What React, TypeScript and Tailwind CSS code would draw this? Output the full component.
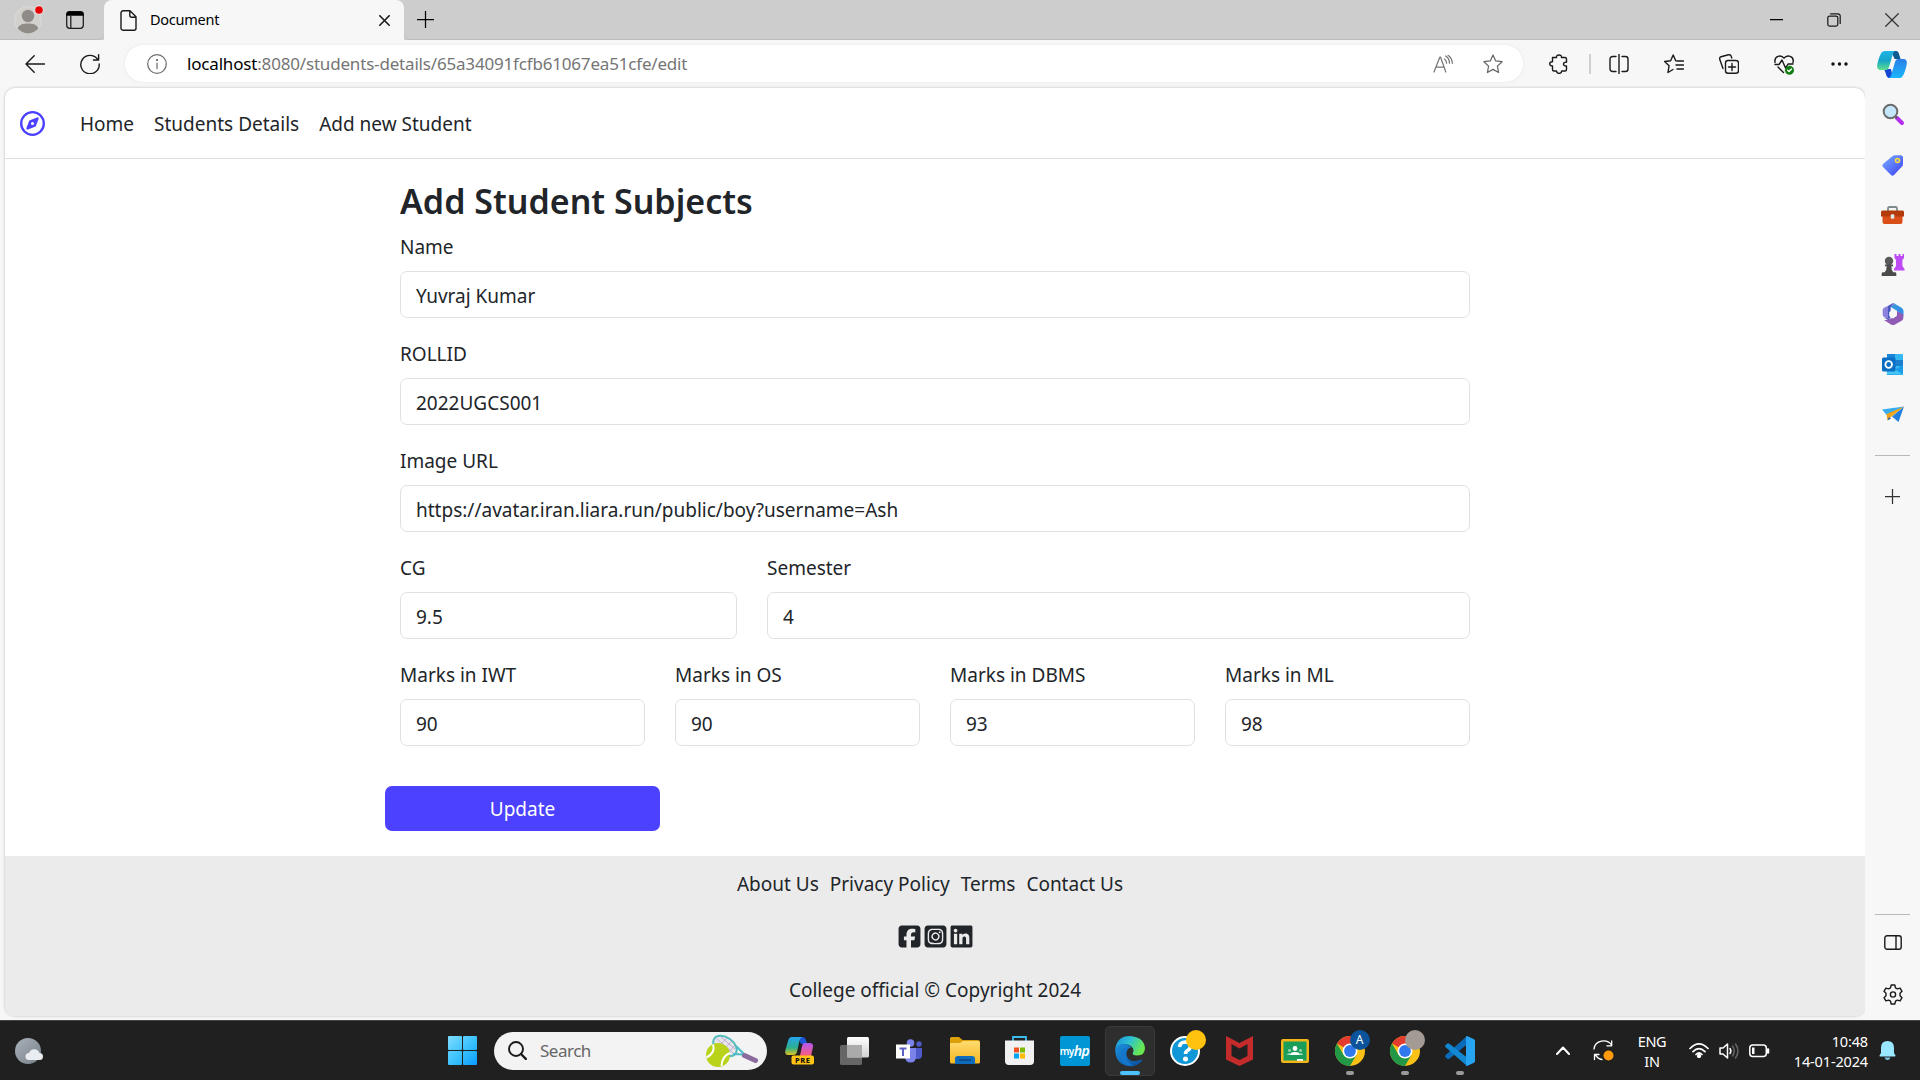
import React from "react";
import { FaLinkedin, FaRegCompass, FaSquareFacebook, FaSquareInstagram } from "react-icons/fa6";

type Kids = { children: React.ReactNode };

function Line({ w, h, vb, sw = 1.25, color = "#1a1a1a", children }: Kids & { w: number; h: number; vb?: string; sw?: number; color?: string }) {
  return (
    <svg width={w} height={h} viewBox={vb ?? `0 0 ${w} ${h}`} fill="none" stroke={color} strokeWidth={sw} strokeLinecap="round" strokeLinejoin="round" className="shrink-0">
      {children}
    </svg>
  );
}

function Art({ w, h, children }: Kids & { w: number; h: number }) {
  return (
    <svg width={w} height={h} viewBox={`0 0 ${w} ${h}`} className="block shrink-0 overflow-visible">
      {children}
    </svg>
  );
}

function Cell({ children, className = "" }: Kids & { className?: string }) {
  return <div className={`flex shrink-0 items-center justify-center ${className}`}>{children}</div>;
}

/* ---------- browser chrome ---------- */

function TabStrip() {
  return (
    <div className="flex h-10 shrink-0 bg-[#cdcdcd] text-black">
      <div className="flex w-[104px] items-center rounded-br-[6px] border-b border-[#bdbdbd] pl-[14px]">
        <Art w={30} h={28}>
          <circle cx="14" cy="14" r="13.3" fill="#d2d0cc" stroke="#dedcd8" />
          <circle cx="14" cy="10" r="6.2" fill="#8f8b87" />
          <path d="M3.6 22.3C5 18.6 9 17.5 14 17.5s9 1.100 10.400 4.800A13.300 13.300 0 0 1 14 27.500a13.300 13.300 0 0 1-10.400-5.200Z" fill="#8f8b87" />
          <circle cx="25" cy="4" r="4.700" fill="#e8e4e4" />
          <circle cx="25" cy="4" r="3.800" fill="#e60000" />
        </Art>
        <div className="ml-[22px]">
          <Line w={18} h={18}>
            <rect x="0.700" y="0.700" width="16.600" height="16.600" rx="3" />
            <path d="M1 4V3a2 2 0 0 1 2-2h12a2 2 0 0 1 2 2v1Z" fill="#000" stroke="#000" />
            <path d="M4.800 5v12" />
          </Line>
        </div>
      </div>
      <div className="flex w-[300px] items-center rounded-t-[8px] bg-[#f7f7f7] pl-4 pr-[14px]">
        <Line w={17} h={21} sw={1.4}>
          <path d="M3 .8h7l6 6v11.400a2 2 0 0 1-2 2H3a2 2 0 0 1-2-2V2.800a2 2 0 0 1 2-2ZM9.800 1v4.200a2 2 0 0 0 2 2H16" />
        </Line>
        <span className="ml-[13px] text-[14.500px] tracking-[-0.250px]">Document</span>
        <div className="ml-auto mt-px">
          <Line w={11} h={11} sw={1.6}>
            <path d="M.8.8l9.400 9.400M10.200.8L.8 10.200" />
          </Line>
        </div>
      </div>
      <div className="flex flex-1 items-center rounded-bl-[6px] border-b border-[#bdbdbd] pl-[13px] pr-[21px]">
        <Line w={17} h={17} color="#000">
          <path d="M8.500.5v16M.5 8.500h16" />
        </Line>
        <div className="ml-auto flex items-center">
          <Line w={13} h={13} color="#000">
            <path d="M0 6.500h13" />
          </Line>
          <div className="ml-11">
            <Line w={14} h={14}>
              <rect x=".8" y="3" width="10" height="10" rx="1.800" />
              <path d="M3.600.8H11a2.200 2.200 0 0 1 2.200 2.200v7.400" />
            </Line>
          </div>
          <div className="ml-[44px]">
            <Line w={14} h={14} color="#333">
              <path d="M.7.7l12.600 12.600M13.300.7L.7 13.300" />
            </Line>
          </div>
        </div>
      </div>
    </div>
  );
}

const STAR = "M10 1l2.700 5.900 6.400.8-4.700 4.400 1.200 6.400L10 15.400l-5.600 3.100 1.200-6.400L.9 7.700l6.400-.8Z";

function CopilotIcon() {
  return (
    <Art w={30} h={27}>
      <defs>
        <linearGradient id="cpA" x1="0" y1="0" x2="0" y2="1"><stop stopColor="#1fb4e8" /><stop offset=".5" stopColor="#16a5c8" /><stop offset="1" stopColor="#5fe08e" /></linearGradient>
        <linearGradient id="cpB" x1="0" y1="0" x2="0" y2="1"><stop stopColor="#2b7fe8" /><stop offset="1" stopColor="#19b6fb" /></linearGradient>
      </defs>
      <path d="M14 0h5c2.500 0 3 2.500 3.600 5l1 3h-6Z" fill="#0c5a92" />
      <path d="M7 18h7l2 9h-3c-3 0-3.500-2-4.200-4.500Z" fill="#1747d4" />
      <path d="M8 0h10c-1.500 1-2 2.500-2.600 4.500L12 16c-.8 2.500-2 3-4 3H4c-3 0-4.500-2-3.700-5.500C1.200 9 2.600 5 3.800 2.800 4.800.8 6 0 8 0Z" fill="url(#cpA)" />
      <path d="M22 27H12c1.500-1 2-2.500 2.600-4.500L18 11c.8-2.500 2-3 4-3h4c3 0 4.500 2 3.700 5.500-.9 4.500-2.300 8.500-3.500 10.700C25.200 26.200 24 27 22 27Z" fill="url(#cpB)" />
    </Art>
  );
}

function Toolbar() {
  return (
    <div className="flex h-12 shrink-0 items-start bg-[#f7f7f7]">
      <div className="flex h-12 w-[125px] items-center pl-[25px]">
        <Line w={20} h={18} sw={1.4}>
          <path d="M19.500 9H1M9.200.8L1 9l8.200 8.200" />
        </Line>
        <div className="ml-[35px]">
          <Line w={20} h={20} sw={1.4}>
            <path d="M17.500 5.200A9.200 9.200 0 1 0 19.200 10M18.600.8V6h-5.200" />
          </Line>
        </div>
      </div>
      <div className="mt-[5px] flex h-[37px] w-[1398px] items-center rounded-full bg-white pl-[22px] pr-[20px] shadow-[0_0_4px_rgba(0,0,0,0.06)]">
        <Line w={20} h={20} color="#6e6e6e">
          <circle cx="10" cy="10" r="9.300" />
          <path d="M10 9v5.500" />
          <circle cx="10" cy="6" r=".5" fill="#6e6e6e" />
        </Line>
        <span className="ml-[20px] text-[17px] tracking-[-0.180px] text-[#757575]">
          <span className="text-black">localhost</span>:8080/students-details/65a34091fcfb61067ea51cfe/edit
        </span>
        <div className="ml-auto flex items-center gap-[30px]">
          <Line w={20} h={18} color="#767676">
            <path d="M1 17L6.800 2.200h.8L12.800 17M3 12h8M11.500 4c1.500 1 2 2.500 2.100 4.200M12.600 1c2.600 1.500 3.800 4 3.900 7.200M15 .3c3 2 4.200 4.700 4.300 8" />
          </Line>
          <Line w={20} h={20} color="#666"><path d={STAR} /></Line>
        </div>
      </div>
      <div className="flex h-12 flex-1 items-center">
        <Cell className="ml-[26px] w-5">
          <Line w={20} h={20} sw={1.4}>
            <path d="M3.500 3.500h4c-.6-3.400 5.600-3.400 5 0H16c1 0 1.500.5 1.500 1.500v3.200c-4-.7-4 4.400 0 3.800V15.500c0 1-.5 1.500-1.500 1.500h-3.300c-.2 3.200-5 3.200-5.200 0H5c-1 0-1.500-.5-1.500-1.500V12C-.2 12-.2 7.800 3.500 7.800Z" />
          </Line>
        </Cell>
        <div className="ml-5 h-5 w-[2px] bg-[#cfcfcf]" />
        <Cell className="ml-[18px] w-5">
          <Line w={20} h={20} sw={1.4}>
            <path d="M10 .5v19M7 2.500H3.500A2.500 2.500 0 0 0 1 5v10a2.500 2.500 0 0 0 2.500 2.500H7M13 2.500h3.500A2.500 2.500 0 0 1 19 5v10a2.500 2.500 0 0 1-2.500 2.500H13" />
          </Line>
        </Cell>
        <Cell className="ml-[35px] w-5">
          <Line w={20} h={20} sw={1.4}>
            <path d="M12 6.700h-.3L9.200 1 6.600 6.700l-6 .8 4.500 4.200L4 18.500l5-3M13 7h6.500M12 11h7.500M13 15h6.500" />
          </Line>
        </Cell>
        <Cell className="ml-[35px] w-5">
          <Line w={20} h={20} sw={1.4}>
            <rect x="6.500" y="6.500" width="13" height="12.800" rx="2.500" />
            <path d="M13 9.500v7M9.500 13h7M4 14.500L.8 5.400A2.200 2.200 0 0 1 2 2.700L9.500.8a2.200 2.200 0 0 1 2.700 1.500l.6 1.700" />
          </Line>
        </Cell>
        <Cell className="ml-[35px] w-5">
          <Line w={20} h={21} sw={1.4}>
            <path d="M1 8.500C0 2 7 .2 10 4.200 13 .2 20.500 2 19 8.500M1 10.500h4L8 6l3.500 8 2.500-4h5M4 13l5.500 5.500" />
            <circle cx="15.500" cy="16.200" r="4.300" fill="#107c10" stroke="#107c10" strokeWidth=".5" />
            <path d="M13.600 16.300l1.400 1.300 2.500-2.600" stroke="#fff" />
          </Line>
        </Cell>
        <Cell className="ml-[37px] w-4">
          <Art w={17} h={4}><g fill="#111"><circle cx="2" cy="2" r="1.700" /><circle cx="8.500" cy="2" r="1.700" /><circle cx="15" cy="2" r="1.700" /></g></Art>
        </Cell>
        <div className="ml-[30px]"><CopilotIcon /></div>
      </div>
    </div>
  );
}

/* ---------- edge sidebar ---------- */

function Sidebar() {
  return (
    <div className="flex w-[55px] flex-col items-center bg-[#f7f7f7]">
      <Cell className="h-[52px] w-full">
        <Art w={22} h={22}>
          <path d="M15 15l5 5" stroke="#b52ef0" strokeWidth="4" strokeLinecap="round" />
          <path d="M12.500 12.500l2.500 2.500" stroke="#555" strokeWidth="2" />
          <circle cx="8.500" cy="8.500" r="6.800" fill="#c4e6fb" stroke="#6c6c6c" strokeWidth="2" />
        </Art>
      </Cell>
      <Cell className="h-[50px] w-full">
        <Art w={21} h={21}>
          <defs><linearGradient id="tag" x1="0" y1="0" x2="1" y2="1"><stop stopColor="#79b2ff" /><stop offset="1" stopColor="#3c3cf5" /></linearGradient></defs>
          <path d="M10 1.500Q11.500.3 13 .3h5.500Q21 .3 21 3v6q0 1.500-1 2.500l-8 8.500q-1.500 1.500-3 0l-8-8q-1.500-1.500 0-3Z" fill="url(#tag)" />
          <circle cx="15.500" cy="5.500" r="2" fill="#5f8df5" stroke="#ffd83b" strokeWidth="1.600" />
        </Art>
      </Cell>
      <Cell className="h-[50px] w-full">
        <Art w={23} h={18}>
          <path d="M7 5V2.500Q7 1 8.500 1h6Q16 1 16 2.500V5" fill="none" stroke="#7d8a8c" strokeWidth="1.800" />
          <rect x="1.500" y="6" width="20" height="12" rx="2" fill="#d94f17" />
          <path d="M0 6q0-1.500 1.500-1.500h20Q23 4.500 23 6v4.500H0Z" fill="#b23a0c" />
          <rect x="9.700" y="8.300" width="3.600" height="4.500" rx="1" fill="#dfe8e8" />
        </Art>
      </Cell>
      <Cell className="h-[49px] w-full">
        <Art w={24} h={24}>
          <path d="M13.500 1h2v2h2V1h2v2h2V1H23v4l-1.600 2v6l2.100 3v1.500H13V16l2-3V7l-1.500-2Z" fill="#bd4af5" />
          <circle cx="8" cy="8" r="4.200" fill="#5a5a5a" />
          <path d="M4 11.500h8v1.700h-1.700q0 4 2 6h2q1 0 1 1.500V23H.7v-2.300q0-1.500 1-1.500h2q2-2 2-6H4Z" fill="#4b4b4b" />
        </Art>
      </Cell>
      <Cell className="h-[50px] w-full">
        <Art w={22} h={22}>
          <path d="M11 0l4 2 5 3q1.300 1 1.300 2.500V14l-6-3V8L7 3Z" fill="#3598dc" />
          <path d="M9 1.500Q11-.3 13.500.8L8.500 4v13L2 14Q.7 13 .7 11.500V7Q.7 5.500 2 4.700Z" fill="#8a82dd" />
          <path d="M8.500 4L11 .2 6 3v12l5 5-9-5.500q5 2 6.500-1Z" fill="#4759bd" />
          <path d="M21.300 11v4q0 1.500-1.300 2.500l-7 4q-2 1-4 0L2 17q5 .5 8-2l5-3.500V8Z" fill="#8f5bb5" />
          <path d="M15.200 8l6.100 3.500v-4L15 3.500Z" fill="#348ee8" />
          <path d="M11 6.800l3.800 2.300v4L11 15.400l-3.800-2.300v-4Z" fill="#f7f7f7" />
        </Art>
      </Cell>
      <Cell className="h-[50px] w-full">
        <Art w={21} h={21}>
          <rect x="5" y="0" width="16" height="19" rx="1" fill="#35b8f1" />
          <rect x="5" y="0" width="8" height="6" fill="#1a86d9" />
          <rect x="13" y="6" width="8" height="6" fill="#1b7fd0" />
          <path d="M4 21l17-10v9q0 1-1 1Z" fill="#1a9be8" />
          <path d="M4 10l17 10.500H5Z" fill="#45c6f5" />
          <rect x="0" y="3.500" width="13.500" height="14" rx="1.500" fill="#0a6fc4" />
          <circle cx="6.700" cy="10.500" r="3.300" fill="none" stroke="#fff" strokeWidth="1.800" />
        </Art>
      </Cell>
      <Cell className="h-[50px] w-full">
        <Art w={22} h={16}>
          <path d="M0 3.500L22 .5l-16 10Z" fill="#35adf0" />
          <path d="M22 .5L16.500 16 10 10.500Z" fill="#237fe0" />
          <path d="M22 .5L4.500 8l1 6.500 4-4Z" fill="#f0a31c" />
          <path d="M5.500 14.500l3.500-2-2-1.500Z" fill="#275da3" />
        </Art>
      </Cell>
      <div className="mt-4 h-px w-[35px] bg-[#b9b9b9]" />
      <Cell className="h-20 w-full">
        <Line w={15} h={15} color="#333"><path d="M7.500 0v15M0 7.500h15" /></Line>
      </Cell>
      <div className="mt-auto h-px w-[35px] bg-[#b9b9b9]" />
      <Cell className="h-[55px] w-full">
        <Line w={18} h={15} sw={1.4}><rect x=".8" y=".8" width="16.400" height="13.400" rx="2.200" /><path d="M12 1v13" /></Line>
      </Cell>
      <Cell className="mb-[2px] h-[48px] w-full">
        <Line w={20} h={21} sw={1.4}>
          <path d="M8.200 1h3.600l.7 2.800 1.900 1.100 2.700-.8 1.900 3.200-2 2v2.400l2 2-1.900 3.200-2.700-.8-1.900 1.100-.7 2.800H8.200l-.7-2.800-1.900-1.100-2.700.8L1 13.700l2-2V9.300l-2-2 1.900-3.200 2.700.8 1.900-1.100Z" />
          <circle cx="10" cy="10.500" r="2.600" />
        </Line>
      </Cell>
    </div>
  );
}

/* ---------- page ---------- */

function Field({ label, value, className = "", ls = "" }: { label: string; value: string; className?: string; ls?: string }) {
  return (
    <label className={`block ${className}`}>
      <span className={`block h-[30px] text-[19px] leading-[30px] ${ls}`}>{label}</span>
      <input
        defaultValue={value}
        className={`mt-[9px] block h-[47px] w-full rounded-[7px] border border-[#dee2e6] bg-white px-[15px] pt-[2px] text-[19px] outline-none ${ls}`}
      />
    </label>
  );
}

function Page() {
  return (
    <div className="ml-[5px] flex h-[928px] w-[1860px] flex-col overflow-hidden rounded-[10px] bg-white text-[19px] text-[#212529] shadow-[0_0_3px_rgba(0,0,0,0.25)]">
      <nav className="flex h-[71px] shrink-0 items-center border-b border-[#dee0e6] pl-[15px]">
        <FaRegCompass size={25} color="#4b41ff" />
        <div className="ml-[35px] flex gap-5 pt-[2px] leading-[30px]">
          <a>Home</a>
          <a>Students Details</a>
          <a>Add new Student</a>
        </div>
      </nav>
      <form className="ml-[395px] mt-[21px] w-[1070px]">
        <h1 className="mb-[10px] h-[42px] text-[34px] font-semibold leading-[42px]">Add Student Subjects</h1>
        <div className="flex flex-col gap-[21px]">
          <Field label="Name" value="Yuvraj Kumar" />
          <Field label="ROLLID" value="2022UGCS001" />
          <Field label="Image URL" value="https://avatar.iran.liara.run/public/boy?username=Ash" />
          <div className="flex gap-[30px]">
            <Field label="CG" value="9.5" className="w-[337px]" />
            <Field label="Semester" value="4" className="flex-1" />
          </div>
          <div className="grid grid-cols-4 gap-[30px]">
            <Field label="Marks in IWT" value="90" />
            <Field label="Marks in OS" value="90" />
            <Field label="Marks in DBMS" value="93" />
            <Field label="Marks in ML" value="98" />
          </div>
        </div>
        <button type="button" className="-ml-[15px] mt-10 block h-[45px] w-[275px] rounded-[7px] bg-[#4b41ff] pt-[2px] text-white">Update</button>
      </form>
      <footer className="mt-[25px] flex flex-1 flex-col items-center bg-[#ebebeb]">
        <div className="mr-[10px] mt-[13px] flex h-[30px] gap-[11px] leading-[30px]">
          <a>About Us</a>
          <a>Privacy Policy</a>
          <a>Terms</a>
          <a>Contact Us</a>
        </div>
        <div className="mt-[24px] flex h-[26px] items-center gap-[1px]">
          <FaSquareFacebook size={25} />
          <FaSquareInstagram size={25} />
          <FaLinkedin size={25} />
        </div>
        <div className="mt-[26px] h-[30px] leading-[30px]">College official © Copyright 2024</div>
      </footer>
    </div>
  );
}

/* ---------- taskbar ---------- */

function Chrome({ badge, letter }: { badge: string; letter?: string }) {
  return (
    <div className="relative">
      <Art w={30} h={30}>
        <circle cx="15" cy="15" r="15" fill="#fbc116" />
        <path d="M15 15L2 7.500A15 15 0 0 1 28 7.500H15Z" fill="#e33b2e" />
        <path d="M2 7.500A15 15 0 0 0 15 30l6.500-11.200L15 15 8.500 18.800Z" fill="#229746" />
        <circle cx="15" cy="15" r="7.500" fill="#fff" />
        <circle cx="15" cy="15" r="5.900" fill="#2f78ee" />
      </Art>
      <div className={`absolute -right-[5px] -top-[6px] flex size-5 items-center justify-center rounded-full text-[12px] leading-none text-white ${badge}`}>{letter}</div>
    </div>
  );
}

function AppCell({ children, running = false, active = false }: Kids & { running?: boolean; active?: boolean }) {
  return (
    <div className="flex h-[60px] w-[55px] shrink-0 items-center justify-center">
      <div className={`relative flex h-[50px] w-[50px] items-center justify-center rounded-[5px] ${active ? "border border-[#3a3a3a] bg-[#2e2e2e]" : ""}`}>
        {children}
        {running && <div className="absolute bottom-[1px] h-1 w-2 rounded-full bg-[#9a9a9a]" />}
        {active && <div className="absolute bottom-0 h-1 w-5 rounded-full bg-[#4cc2ff]" />}
      </div>
    </div>
  );
}

function Taskbar() {
  return (
    <div className="flex h-[60px] shrink-0 items-center border-t border-[#444] bg-[#202020] text-white">
      <div className="w-[448px] pl-[15px]">
        <Art w={28} h={26}>
          <defs><linearGradient id="moon" x1="0" y1="0" x2="1" y2="1"><stop stopColor="#aab2bb" /><stop offset="1" stopColor="#777f89" /></linearGradient></defs>
          <circle cx="13" cy="13" r="13" fill="url(#moon)" />
          <path d="M14 22a3.500 3.500 0 0 1 0-7 5.500 5.500 0 0 1 10.500 0 3.500 3.500 0 0 1 0 7Z" fill="#e9edf1" />
        </Art>
      </div>
      <Art w={29} h={29}>
        <defs><linearGradient id="win" x1="0" y1="0" x2="29" y2="29" gradientUnits="userSpaceOnUse"><stop stopColor="#7fdcff" /><stop offset=".55" stopColor="#38c0fb" /><stop offset="1" stopColor="#0a9cff" /></linearGradient></defs>
        <g fill="url(#win)"><rect width="14" height="14" rx="1" /><rect x="15" width="14" height="14" rx="1" /><rect y="15" width="14" height="14" rx="1" /><rect x="15" y="15" width="14" height="14" rx="1" /></g>
      </Art>
      <div className="ml-[17px] flex h-[38px] w-[273px] items-center rounded-full bg-[#f3f3f3] pl-[14px] pr-[9px]">
        <Line w={19} h={19} sw={1.9}><circle cx="8" cy="8" r="7" /><path d="M13 13l4.800 4.800" sw-end="" strokeWidth={2.4} /></Line>
        <span className="ml-[13px] text-[17px] tracking-[-0.500px] text-[#666]">Search</span>
        <div className="ml-auto">
          <Art w={53} h={32}>
            <ellipse cx="20" cy="11" rx="13" ry="8.500" transform="rotate(35 20 11)" fill="#e8e4ee" stroke="#4fbdb9" strokeWidth="2" />
            <path d="M12 4l16 14M16 2l14 12M10 9l14 12M12 13L22 3M16 17L27 6M22 19l8-9" stroke="#a99bb8" strokeWidth=".7" />
            <path d="M28 19l11 .5M31 11l8 8" stroke="#4fbdc9" strokeWidth="2" />
            <path d="M39.500 20.500l11 5" stroke="#8b6a9e" strokeWidth="5" strokeLinecap="round" />
            <circle cx="13" cy="20" r="12" fill="#b9d21a" />
            <path d="M8 9.500q3 8-6.500 13M25 18q-8 3-8.500 13" fill="none" stroke="#fff" strokeWidth="2" />
          </Art>
        </div>
      </div>
      <div className="ml-[5px] flex">
        <AppCell>
          <Art w={29} h={28}>
            <defs>
              <linearGradient id="pA" x1="0" y1="0" x2="0" y2="1"><stop stopColor="#25a5f0" /><stop offset=".6" stopColor="#2cb08c" /><stop offset="1" stopColor="#e3c51d" /></linearGradient>
              <linearGradient id="pB" x1="0" y1="0" x2="0" y2="1"><stop stopColor="#b057f0" /><stop offset="1" stopColor="#ff5e78" /></linearGradient>
            </defs>
            <path d="M13 0h4q3 0 4 3l1 4h-6Z" fill="#1f55d8" />
            <path d="M7 0h10q-2 1-2.600 4L12 15q-.8 3-4 3H3.500Q-.5 18 .3 13.500L3 4Q4 0 7 0Z" fill="url(#pA)" />
            <path d="M20 6h4.500q4 0 3.500 4l-2 9H15l2-10q.8-3 3-3Z" fill="url(#pB)" />
            <rect x="6.500" y="18.500" width="22.500" height="9" rx="2" fill="#ffc414" />
            <text x="17.800" y="26" textAnchor="middle" fontSize="7.500" fontWeight="800" letterSpacing=".6" fill="#111">PRE</text>
          </Art>
        </AppCell>
        <AppCell>
          <Art w={29} h={28}>
            <defs><linearGradient id="tv" x1="0" y1="0" x2="0" y2="1"><stop stopColor="#fff" /><stop offset="1" stopColor="#d0d0d0" /></linearGradient></defs>
            <rect y="8" width="22" height="20" rx="1.500" fill="#666" />
            <rect x="7" width="22" height="20.500" rx="1.500" fill="url(#tv)" />
            <rect x="7" y="8" width="15" height="12.500" fill="#aaa" />
          </Art>
        </AppCell>
        <AppCell>
          <Art w={28} h={24}>
            <circle cx="14.500" cy="4" r="3.800" fill="#7b83eb" /><circle cx="23" cy="5" r="2.700" fill="#5059c9" />
            <path d="M18 9h8v7q0 4-4 4h-4Z" fill="#5059c9" />
            <path d="M9 9h11v8.500q0 6-5.500 6T9 17.500Z" fill="#7b83eb" />
            <rect y="5.500" width="14" height="14" fill="#fff" />
            <path d="M3.500 8.500h7v2H8v6.500H6v-6.500H3.500Z" fill="#5b61c6" />
          </Art>
        </AppCell>
        <AppCell>
          <Art w={30} h={27}>
            <defs><linearGradient id="fold" x1="0" y1="0" x2="0" y2="1"><stop stopColor="#ffdb70" /><stop offset="1" stopColor="#f5b721" /></linearGradient></defs>
            <path d="M0 1.500Q0 0 1.500 0H9l3.500 3H28q2 0 2 2v6H0Z" fill="#dba00c" />
            <path d="M0 6h10l3-2h15q2 0 2 1.500V25q0 1.500-1.500 1.500h-27Q0 26.500 0 25Z" fill="url(#fold)" />
            <path d="M5 27v-5q0-3 3-3h14q3 0 3 3v5Z" fill="#0f6cbd" /><path d="M9 23h12" stroke="#083e74" strokeWidth="1.200" />
          </Art>
        </AppCell>
        <AppCell>
          <Art w={29} h={29}>
            <path d="M8 5V1h13v4" fill="none" stroke="#3bbdf0" strokeWidth="1.800" />
            <path d="M0 4.500h29V25q0 4-4 4H4q-4 0-4-4Z" fill="#f1f1f1" />
            <path d="M9 11.500h5v5H9Z" fill="#f25022" /><path d="M15 11.500h5v5h-5Z" fill="#7fba00" /><path d="M9 17.500h5v5H9Z" fill="#00a4ef" /><path d="M15 17.500h5v5h-5Z" fill="#ffb900" />
          </Art>
        </AppCell>
        <AppCell>
          <div className="flex size-[30px] items-center justify-center rounded-[2px] bg-[#0096d6] text-[10px] font-semibold leading-none tracking-[-0.500px]">
            my<span className="text-[14px] italic">hp</span>
          </div>
        </AppCell>
        <AppCell active>
          <Art w={30} h={30}>
            <defs>
              <linearGradient id="eA" x1="0" y1="0" x2="1" y2=".4"><stop stopColor="#1b8fdc" /><stop offset=".5" stopColor="#2cc1d4" /><stop offset="1" stopColor="#6ae850" /></linearGradient>
              <linearGradient id="eB" x1="0" y1="0" x2="1" y2="1"><stop stopColor="#1b91e0" /><stop offset="1" stopColor="#0c4b99" /></linearGradient>
            </defs>
            <path d="M.3 13Q2 0 15 0q14 1 15 12 0 7.500-8 7.500-5.500 0-4-3 1.500-3-1.500-6Q9 5 .3 13Z" fill="url(#eA)" />
            <path d="M.2 13Q5 5 13 9q2.500 1 3.500 2.500-6 1-5 7.500 2 9 15 4.500 1.500 0 .5 1.500-5 5.500-12 5.200Q0 29 .2 13Z" fill="url(#eB)" />
            <path d="M14 11q-6 8-1 14 2 3.500 5 4.600Q6 31 5.500 20 6 12 14 11Z" fill="#1577cb" />
          </Art>
        </AppCell>
        <AppCell>
          <Art w={30} h={30}>
            <circle cx="15" cy="15" r="14" fill="#0f97d8" stroke="#fff" strokeWidth="2" />
            <path d="M9.500 11q.5-5 6-5 5.500.3 5 4.500-.3 2.500-3 4-2 1-2 3.500" fill="none" stroke="#fff" strokeWidth="3.600" />
            <circle cx="15.500" cy="23" r="2.500" fill="#fff" /><circle cx="26" cy="4" r="10" fill="#ffc20e" />
          </Art>
        </AppCell>
        <AppCell>
          <Art w={27} h={30}><path d="M0 0l13.500 7L27 0v23.500L13.500 30 0 23.500Zm5.500 8v12l8 4 8-4V8l-8 4.500Z" fill="#c42c2c" fillRule="evenodd" /></Art>
        </AppCell>
        <AppCell>
          <Art w={28} h={24}>
            <rect width="28" height="24" rx="2" fill="#f2b619" /><rect x="2.500" y="2.500" width="23" height="19" fill="#1b9e5a" />
            <circle cx="14" cy="9.500" r="2.400" fill="#fff" /><path d="M9 16q0-3 5-3t5 3Z" fill="#fff" />
            <circle cx="8.500" cy="11.500" r="1.400" fill="#9ad5b8" /><circle cx="19.500" cy="11.500" r="1.400" fill="#9ad5b8" />
            <path d="M6 16q0-2 3-2v2Zm16 0q0-2-3-2v2Z" fill="#9ad5b8" /><rect x="16" y="20" width="6" height="1.800" fill="#fff" />
          </Art>
        </AppCell>
        <AppCell running><Chrome badge="bg-[#0b539b]" letter="A" /></AppCell>
        <AppCell running><Chrome badge="bg-[#a39a93]" /></AppCell>
        <AppCell running>
          <Art w={30} h={30}>
            <path d="M22 0v8.500L4 23q-.8.700-1.600 0L.4 21q-.8-.9 0-1.700Z" fill="#0a6cb8" />
            <path d="M22 30v-8.500L4 7.500q-.8-.7-1.600 0L.4 9.300q-.8.900 0 1.700Z" fill="#1287d2" />
            <path d="M22 0l7 3.300q1 .5 1 1.700v20q0 1.200-1 1.700L22 30q-1.200-.2-1-1.500V1.500Q20.800.2 22 0Z" fill="#27a5f2" />
          </Art>
        </AppCell>
      </div>
      <div className="ml-[69px] flex items-center">
        <Line w={14} h={9} sw={2} color="#fff"><path d="M1 8l6-6.500L13 8" /></Line>
        <div className="ml-[23px]">
          <Line w={21} h={21} color="#fff" sw={1.3}>
            <path d="M1 9C2 0 14-1.500 18.500 5M18.700 1v4.800h-4.800M9 19.500q-4-.3-6.800-4.800M1.500 19.500v-5h4.500" />
            <circle cx="15.500" cy="15.500" r="5" fill="#ff9a0c" stroke="none" />
          </Line>
        </div>
        <div className="ml-[20px] w-[36px] text-center text-[14.500px] leading-5 tracking-[-0.300px]">ENG<br />IN</div>
        <div className="ml-[19px]">
          <Line w={20} h={15} color="#fff" sw={1.7}>
            <path d="M1 5.500q9-9 18 0M4 8.700q6-6 12 0M7 11.500q3-3 6 0" /><circle cx="10" cy="13" r="1.300" fill="#fff" />
          </Line>
        </div>
        <div className="ml-[10px]">
          <Line w={20} h={18} color="#fff" sw={1.5}>
            <path d="M1 6h3l4.500-4v14L4 12H1ZM11 6.500q1.800 2.500 0 5" /><path d="M13.500 4q3.500 5 0 10M16.500 2q5 7 0 14" stroke="#666" />
          </Line>
        </div>
        <div className="ml-[10px]">
          <Line w={21} h={14} color="#fff" sw={1.5}>
            <rect x=".8" y="1" width="16.500" height="11.500" rx="3" /><rect x="3" y="3.500" width="2.500" height="6.500" fill="#fff" stroke="none" /><path d="M19 5.500v3" sw-end="" strokeWidth={2.500} />
          </Line>
        </div>
        <div className="ml-[18px] w-[80px] text-right text-[14.500px] leading-5 tracking-[-0.150px] whitespace-nowrap">10:48<br />14-01-2024</div>
        <div className="ml-[11px]">
          <Art w={17} h={19}>
            <path d="M8.500 0q6.500 0 6.500 7v5l1.500 2.500q.3 1-.8 1H1.300q-1.100 0-.8-1L2 12V7q0-7 6.500-7Z" fill="#9ae8ff" /><path d="M5.500 16.500h6q-.8 2.500-3 2.500t-3-2.500Z" fill="#78c6df" />
          </Art>
        </div>
      </div>
    </div>
  );
}

export default function App() {
  return (
    <div className="flex h-[1080px] w-[1920px] flex-col overflow-hidden bg-[#f7f7f7] font-['Noto_Sans',sans-serif]">
      <TabStrip />
      <Toolbar />
      <div className="flex h-[932px] shrink-0">
        <Page />
        <Sidebar />
      </div>
      <Taskbar />
    </div>
  );
}
